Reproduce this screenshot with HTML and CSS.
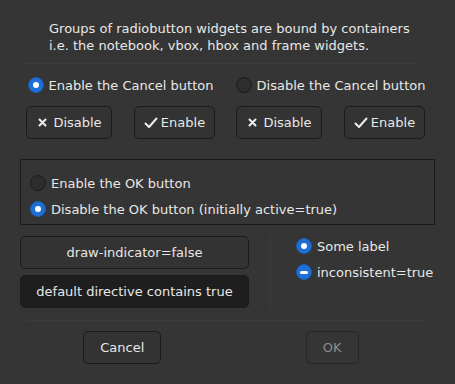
FILE: index.html
```html
<!DOCTYPE html>
<html lang="en">
<head>
  <meta charset="UTF-8">
  <title>Radio Buttons</title>
  <link rel="stylesheet" href="styles.css">
</head>
<body>
  <div class="dialog">
    <p class="intro">Groups of radiobutton widgets are bound by containers<br>i.e. the notebook, vbox, hbox and frame widgets.</p>
    <div class="sep sep-top"></div>

    <div class="cancel-groups">
      <div class="group">
        <label class="radio"><span class="dot checked"></span>Enable the Cancel button</label>
        <div class="btn-row">
          <button class="btn btn-disable">
            <svg width="9" height="9" viewBox="0 0 9 9"><path d="M1.5 1.5L7.5 7.5M7.5 1.5L1.5 7.5" stroke="#eeeeec" stroke-width="2" stroke-linecap="round"/></svg>
            Disable
          </button>
          <button class="btn btn-enable">
            <svg width="14" height="12" viewBox="0 0 14 12"><path d="M1.5 6.5L5 10L12.5 1.5" fill="none" stroke="#eeeeec" stroke-width="2" stroke-linecap="round" stroke-linejoin="round"/></svg>
            Enable
          </button>
        </div>
      </div>
      <div class="group">
        <label class="radio"><span class="dot"></span>Disable the Cancel button</label>
        <div class="btn-row">
          <button class="btn btn-disable">
            <svg width="9" height="9" viewBox="0 0 9 9"><path d="M1.5 1.5L7.5 7.5M7.5 1.5L1.5 7.5" stroke="#eeeeec" stroke-width="2" stroke-linecap="round"/></svg>
            Disable
          </button>
          <button class="btn btn-enable">
            <svg width="14" height="12" viewBox="0 0 14 12"><path d="M1.5 6.5L5 10L12.5 1.5" fill="none" stroke="#eeeeec" stroke-width="2" stroke-linecap="round" stroke-linejoin="round"/></svg>
            Enable
          </button>
        </div>
      </div>
    </div>

    <div class="frame">
      <label class="radio"><span class="dot"></span>Enable the OK button</label>
      <label class="radio"><span class="dot checked"></span>Disable the OK button (initially active=true)</label>
    </div>

    <div class="options">
      <div class="toggles">
        <button class="btn btn-wide">draw-indicator=false</button>
        <button class="btn btn-wide active">default directive contains true</button>
      </div>
      <div class="vsep"></div>
      <div class="side-radios">
        <label class="radio"><span class="dot checked"></span>Some label</label>
        <label class="radio"><span class="dot mixed"></span>inconsistent=true</label>
      </div>
    </div>

    <div class="sep sep-bottom"></div>

    <div class="actions">
      <button class="btn btn-cancel">Cancel</button>
      <button class="btn btn-ok" disabled>OK</button>
    </div>
  </div>
</body>
</html>
```

FILE: styles.css
```css
body {
  margin: 0;
  width: 455px;
  height: 384px;
  overflow: hidden;
  background-color: #353535;
  color: #e8e8e6;
  font-family: "DejaVu Sans", sans-serif;
  font-size: 13px;
}

.dialog {
  display: flex;
  flex-direction: column;
  padding: 20px 20px 0 20px;
}

.intro {
  margin: 0 0 0 29px;
  line-height: 17px;
}

.sep {
  height: 0;
  border-top: 1px dotted #424242;
}

.sep-top {
  margin: 9px 18px 0 5px;
}

.sep-bottom {
  margin: 10px 8px 0 7px;
}

.cancel-groups {
  display: flex;
  gap: 21px;
  margin: 11px 0 0 6px;
}

.group {
  width: 189px;
  display: flex;
  flex-direction: column;
  gap: 11px;
}

.group .radio {
  justify-content: center;
}

.radio {
  display: flex;
  align-items: center;
  gap: 5px;
  height: 20px;
  white-space: nowrap;
}

.dot {
  position: relative;
  box-sizing: border-box;
  width: 16px;
  height: 16px;
  border-radius: 50%;
  border: 1px solid #1b1b1b;
  background-color: #2d2d2d;
  flex: none;
}

.dot.checked,
.dot.mixed {
  border-color: #1a5fb4;
  background-color: #1f6fd6;
}

.dot.checked::after {
  content: "";
  position: absolute;
  left: 4px;
  top: 4px;
  width: 6px;
  height: 6px;
  border-radius: 50%;
  background-color: #fff;
}

.dot.mixed::after {
  content: "";
  position: absolute;
  left: 3px;
  top: 5.5px;
  width: 8px;
  height: 3px;
  border-radius: 1.5px;
  background-color: #fff;
}

.btn-row {
  display: flex;
  justify-content: space-between;
}

.btn {
  box-sizing: border-box;
  height: 33px;
  border: 1px solid #1b1b1b;
  border-radius: 5px;
  background-color: #333333;
  color: #e8e8e6;
  font-family: inherit;
  font-size: 13px;
  display: flex;
  align-items: center;
  justify-content: center;
  gap: 6px;
  padding: 0;
}

.btn-disable {
  width: 86px;
  padding-left: 2px;
}

.btn-enable {
  width: 81px;
  gap: 3px;
}

.frame {
  display: flex;
  flex-direction: column;
  gap: 6px;
  margin: 20px 0 0 0;
  height: 66px;
  box-sizing: border-box;
  border: 1px solid #1b1b1b;
  padding: 13px 0 0 9px;
}

.options {
  display: flex;
  margin-top: 11px;
}

.toggles {
  width: 229px;
  display: flex;
  flex-direction: column;
  gap: 6px;
}

.btn-wide {
  width: 100%;
}

.btn.active {
  background-color: #1e1e1e;
}

.vsep {
  width: 0;
  height: 74px;
  margin-left: 21px;
  border-left: 1px dotted #424242;
}

.side-radios {
  display: flex;
  flex-direction: column;
  gap: 6px;
  margin-left: 25px;
}

.actions {
  display: grid;
  grid-template-columns: 1fr 1fr;
  gap: 6px;
  margin-top: 10px;
}

.actions .btn {
  justify-self: center;
}

.btn-cancel {
  width: 78px;
}

.btn-ok {
  width: 53px;
  margin-left: -1px;
  color: #8b8b8b;
  background-color: #353535;
  border-color: #262626;
}
```
